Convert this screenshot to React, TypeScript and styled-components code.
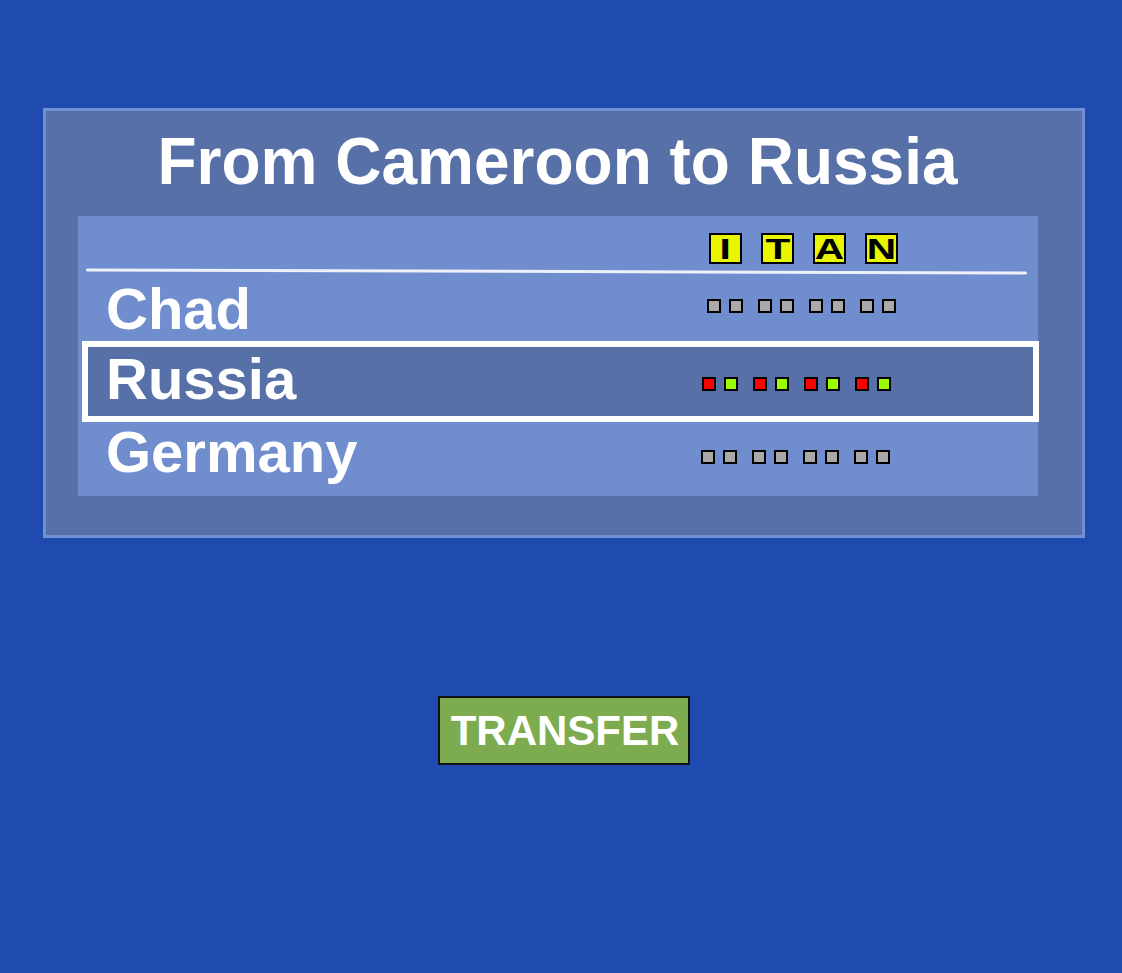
import styled, {createGlobalStyle} from 'styled-components';

const GlobalStyle = createGlobalStyle`
  html, body {
    margin: 0;
    padding: 0;
    background: #1f4ab0;
    font-family: "Liberation Sans", Arial, sans-serif;
  }
`;

type DotColor = 'gray' | 'red' | 'green';

interface Country {
    name: string;
    selected?: boolean;
    active?: boolean;
    dotsAt: number;
    nameTop: number;
    dotsTop: number;
    height: number;
}

const countries: Country[] = [
    {name: 'Chad', dotsAt: 601, nameTop: 7, dotsTop: 26, height: 68},
    {name: 'Russia', dotsAt: 596, nameTop: 3, dotsTop: 30, height: 81, selected: true, active: true},
    {name: 'Germany', dotsAt: 595, nameTop: 1, dotsTop: 28, height: 74},
];

const letters = ['I', 'T', 'A', 'N'];

const dotColors: Record<DotColor, string> = {
    gray: '#a9a9a9',
    red: '#ff0000',
    green: '#99ff00',
};

function App() {
    return (
        <Page>
            <GlobalStyle/>
            <Panel>
                <Title>From Cameroon to Russia</Title>
                <List>
                    <Header>
                        <Badges>
                            {letters.map(l => (
                                <Badge key={l}><BadgeLetter>{l}</BadgeLetter></Badge>
                            ))}
                        </Badges>
                    </Header>
                    <Divider/>
                    {countries.map(c => (
                        <Row key={c.name}
                            $selected={!!c.selected}
                            $dotsAt={c.dotsAt}
                            $height={c.height}
                        >
                            <Name $top={c.nameTop}>{c.name}</Name>
                            <Groups $top={c.dotsTop}>
                                {letters.map(l => (
                                    <Pair key={l}>
                                        <Dot $color={c.active ? 'red' : 'gray'}/>
                                        <Dot $color={c.active ? 'green' : 'gray'}/>
                                    </Pair>
                                ))}
                            </Groups>
                        </Row>
                    ))}
                </List>
            </Panel>
            <ButtonRow>
                <TransferButton type="button">TRANSFER</TransferButton>
            </ButtonRow>
        </Page>
    );
}

export default App;


const Page = styled.div`
  min-height: 973px;
  padding-top: 108px;
  box-sizing: border-box;
`;

const Panel = styled.div`
  margin-left: 43px;
  width: 1042px;
  box-sizing: border-box;
  background: #5870a8;
  border: 3px solid #7190d4;
  padding: 18px 0 39px 32px;
`;

const Title = styled.h1`
  margin: 0 0 23px 0;
  padding-right: 45px;
  font-size: 64px;
  line-height: 64px;
  color: #ffffff;
  font-weight: 700;
  text-align: center;
  transform: scaleY(1.05);
`;

const List = styled.div`
  width: 960px;
  background: #708dce;
  display: flex;
  flex-direction: column;
`;

const Header = styled.div`
  height: 54px;
  box-sizing: border-box;
  padding: 17px 0 0 631px;
`;

const Badges = styled.div`
  display: flex;
  gap: 19px;
`;

const Badge = styled.div`
  width: 33px;
  height: 31px;
  box-sizing: border-box;
  border: 2px solid #000;
  background: #eaf500;
  display: flex;
  align-items: center;
  justify-content: center;
`;

const BadgeLetter = styled.span`
  font-size: 29px;
  line-height: 1;
  font-weight: 700;
  color: #000;
  transform: scaleX(1.4);
  margin-top: 1px;
`;

const Divider = styled.div`
  height: 3px;
  margin: 0 11px 0 8px;
  background: #eef1fa;
  border-radius: 2px;
  transform: rotate(0.18deg);
`;

const Row = styled.div<{ $selected: boolean; $dotsAt: number; $height: number }>`
  display: grid;
  grid-template-columns: ${p => p.$dotsAt}px auto;
  align-items: start;
  box-sizing: border-box;
  height: ${p => p.$height}px;
  ${p => p.$selected
        ? `
    margin: 0 -1px 0 4px;
    border: 6px solid #ffffff;
    background: #5870a8;
    padding-left: 18px;
  `
        : `
    padding-left: 28px;
  `}
`;

const Name = styled.div<{ $top: number }>`
  margin-top: ${p => p.$top}px;
  font-size: 58px;
  line-height: 58px;
  font-weight: 700;
  color: #ffffff;
`;

const Groups = styled.div<{ $top: number }>`
  margin-top: ${p => p.$top}px;
  display: flex;
  gap: 15px;
`;

const Pair = styled.div`
  display: flex;
  gap: 8px;
`;

const Dot = styled.div<{ $color: DotColor }>`
  width: 14px;
  height: 14px;
  box-sizing: border-box;
  border: 2px solid #000;
  background: ${p => dotColors[p.$color]};
`;

const ButtonRow = styled.div`
  margin-top: 158px;
  padding-left: 438px;
`;

const TransferButton = styled.button`
  width: 252px;
  height: 69px;
  box-sizing: border-box;
  border: 2px solid #111;
  background: #7dab50;
  color: #ffffff;
  font-family: "Liberation Sans", Arial, sans-serif;
  font-weight: 700;
  font-size: 42px;
  padding: 0 0 0 2px;
  cursor: pointer;
`;
